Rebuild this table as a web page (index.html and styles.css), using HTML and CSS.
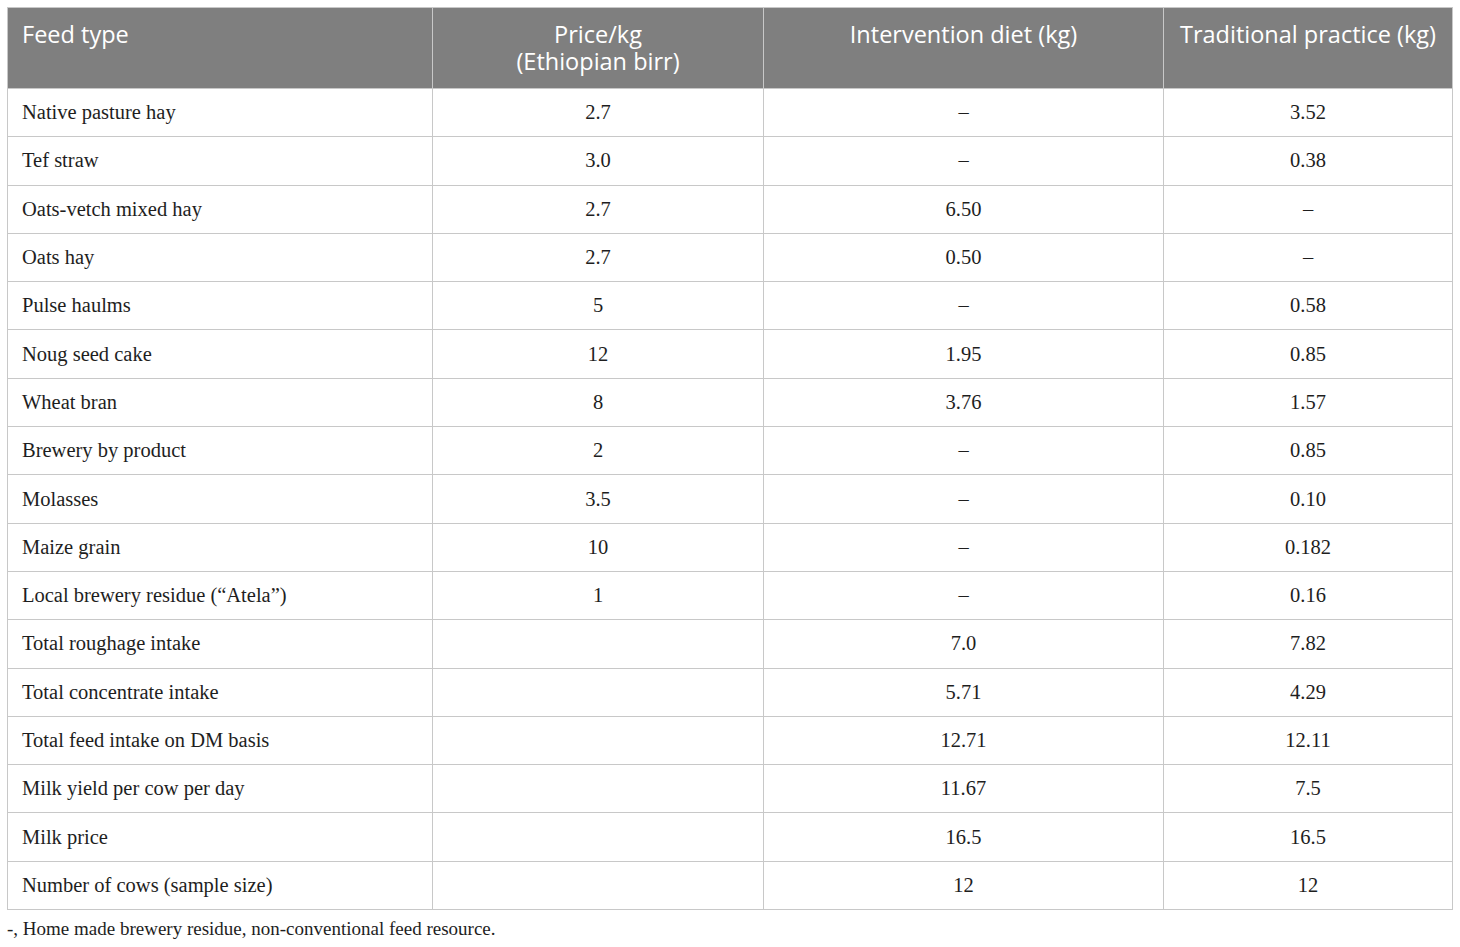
FILE: index.html
```html
<!DOCTYPE html>
<html>
<head>
<meta charset="utf-8">
<link rel="stylesheet" href="styles.css">
</head>
<body>
<div class="wrap">
<table class="feed">
<colgroup>
<col class="c1"><col class="c2"><col class="c3"><col class="c4">
</colgroup>
<thead>
<tr>
<th class="left">Feed type</th>
<th><span class="hl">Price/kg</span><span class="hl">(Ethiopian birr)</span></th>
<th>Intervention diet (kg)</th>
<th>Traditional practice (kg)</th>
</tr>
</thead>
<tbody>
<tr><td class="left">Native pasture hay</td><td>2.7</td><td>–</td><td>3.52</td></tr>
<tr><td class="left">Tef straw</td><td>3.0</td><td>–</td><td>0.38</td></tr>
<tr><td class="left">Oats-vetch mixed hay</td><td>2.7</td><td>6.50</td><td>–</td></tr>
<tr><td class="left">Oats hay</td><td>2.7</td><td>0.50</td><td>–</td></tr>
<tr><td class="left">Pulse haulms</td><td>5</td><td>–</td><td>0.58</td></tr>
<tr><td class="left">Noug seed cake</td><td>12</td><td>1.95</td><td>0.85</td></tr>
<tr><td class="left">Wheat bran</td><td>8</td><td>3.76</td><td>1.57</td></tr>
<tr><td class="left">Brewery by product</td><td>2</td><td>–</td><td>0.85</td></tr>
<tr><td class="left">Molasses</td><td>3.5</td><td>–</td><td>0.10</td></tr>
<tr><td class="left">Maize grain</td><td>10</td><td>–</td><td>0.182</td></tr>
<tr><td class="left">Local brewery residue (“Atela”)</td><td>1</td><td>–</td><td>0.16</td></tr>
<tr><td class="left">Total roughage intake</td><td></td><td>7.0</td><td>7.82</td></tr>
<tr><td class="left">Total concentrate intake</td><td></td><td>5.71</td><td>4.29</td></tr>
<tr><td class="left">Total feed intake on DM basis</td><td></td><td>12.71</td><td>12.11</td></tr>
<tr><td class="left">Milk yield per cow per day</td><td></td><td>11.67</td><td>7.5</td></tr>
<tr><td class="left">Milk price</td><td></td><td>16.5</td><td>16.5</td></tr>
<tr><td class="left">Number of cows (sample size)</td><td></td><td>12</td><td>12</td></tr>
</tbody>
</table>
<p class="note">-, Home made brewery residue, non-conventional feed resource.</p>
</div>
</body>
</html>
```

FILE: styles.css
```css
html, body {
  margin: 0;
  padding: 0;
  background: #ffffff;
}
.wrap {
  padding: 7px 0 0 7px;
}
.feed {
  border-collapse: collapse;
  width: 1445px;
  table-layout: fixed;
}
.c1 { width: 425px; }
.c2 { width: 331px; }
.c3 { width: 400px; }
.c4 { width: 289px; }
.feed th {
  background: #7f7f7f;
  color: #ffffff;
  font-family: "Open Sans", "Noto Sans", sans-serif;
  font-weight: 400;
  font-size: 23.5px;
  line-height: 27px;
  height: 81px;
  box-sizing: border-box;
  padding: 13px 14px 0 14px;
  vertical-align: top;
  text-align: center;
  border: 1px solid #c8c8c8;
}
.feed th .hl {
  display: block;
  height: 27px;
}
.feed td {
  font-family: "Liberation Serif", "Times New Roman", serif;
  font-size: 20.5px;
  color: #1e1e1e;
  height: 48.3px;
  box-sizing: border-box;
  padding: 0 14px;
  text-align: center;
  vertical-align: middle;
  border: 1px solid #c8c8c8;
}
.feed .left {
  text-align: left;
}
.note {
  margin: 8px 0 0 0;
  font-family: "Liberation Serif", "Times New Roman", serif;
  font-size: 19px;
  color: #1e1e1e;
}
```
